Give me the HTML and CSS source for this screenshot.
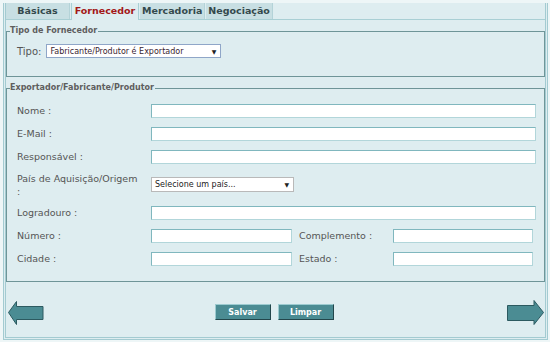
FILE: index.html
```html
<!DOCTYPE html>
<html lang="pt">
<head>
<meta charset="utf-8">
<title>Fornecedor</title>
<link rel="stylesheet" href="styles.css">
</head>
<body>
<div class="panel">
  <div class="tabs">
    <div class="tab">Básicas</div>
    <div class="tab tab-active">Fornecedor</div>
    <div class="tab">Mercadoria</div>
    <div class="tab">Negociação</div>
  </div>

  <fieldset class="group group-tipo">
    <legend>Tipo de Fornecedor</legend>
    <div class="tipo-row">
      <span class="tipo-label">Tipo:</span>
      <div class="select select-tipo"><span>Fabricante/Produtor é Exportador</span><span class="caret">▼</span></div>
    </div>
  </fieldset>

  <fieldset class="group group-exp">
    <legend>Exportador/Fabricante/Produtor</legend>
    <div class="form">
      <label class="lbl">Nome :</label>
      <input class="inp inp-full" type="text">

      <label class="lbl">E-Mail :</label>
      <input class="inp inp-full" type="text">

      <label class="lbl">Responsável :</label>
      <input class="inp inp-full" type="text">

      <label class="lbl">País de Aquisição/Origem<br>:</label>
      <div class="select select-pais"><span>Selecione um país...</span><span class="caret">▼</span></div>

      <label class="lbl">Logradouro :</label>
      <input class="inp inp-full" type="text">

      <label class="lbl">Número :</label>
      <div class="pair">
        <input class="inp inp-half" type="text">
        <label class="lbl lbl-second">Complemento :</label>
        <input class="inp inp-half2" type="text">
      </div>

      <label class="lbl">Cidade :</label>
      <div class="pair">
        <input class="inp inp-half" type="text">
        <label class="lbl lbl-second">Estado :</label>
        <input class="inp inp-half2" type="text">
      </div>
    </div>
  </fieldset>

  <div class="actions">
    <svg class="arrow" width="36" height="26" viewBox="0 0 36 26">
      <path d="M0.5 12.5 L8.5 1.5 L8.5 6.5 L35 6.5 L35 19.5 L8.5 19.5 L8.5 24.5 Z" fill="#4b8c93" stroke="#2c5a60" stroke-width="1"/>
    </svg>
    <div class="buttons">
      <button class="btn" type="button">Salvar</button>
      <button class="btn" type="button">Limpar</button>
    </div>
    <svg class="arrow" width="37" height="26" viewBox="0 0 37 26">
      <path d="M36.5 12.5 L27 0.5 L27 5.5 L0.5 5.5 L0.5 20.5 L27 20.5 L27 24.5 Z" fill="#4b8c93" stroke="#2c5a60" stroke-width="1"/>
    </svg>
  </div>
</div>
</body>
</html>
```

FILE: styles.css
```css
* { box-sizing: border-box; }

html, body {
  margin: 0;
  padding: 0;
  background: #eef6f7;
  font-family: "DejaVu Sans", Verdana, sans-serif;
}

.panel {
  margin: 3px 0 0 3px;
  width: 545px;
  height: 337px;
  background: #deedf0;
  border: 3px double #a3cbd1;
  border-top: none;
  display: flex;
  flex-direction: column;
}

.tabs {
  display: flex;
  height: 17px;
  border-bottom: 1px solid #a9cfd4;
  gap: 1px;
}

.tab {
  min-width: 63px;
  padding: 0 2px;
  height: 16px;
  line-height: 16px;
  text-align: center;
  font-size: 9.5px;
  font-weight: bold;
  color: #34494c;
  background: #c8dfe3;
  border-right: 1px solid #b4d3d8;
}

.tab:first-child { min-width: 64px; }

.tab-active {
  min-width: 68px;
  color: #a31818;
  background: #deedf0;
  border-left: 1px solid #a9cfd4;
  border-right: 1px solid #a9cfd4;
  height: 17px;
}

.group {
  margin: 0;
  padding: 0;
  border: 1px solid #6f9598;
  min-width: 0;
}

.group legend {
  padding: 0 1px 0 0;
  margin-left: -7px;
  font-size: 8px;
  line-height: 10px;
  font-weight: bold;
  color: #5e5e5e;
}

.group-tipo {
  margin-top: 6px;
  padding: 8px 9px 18px 10px;
}

.group-exp {
  margin-top: 6px;
  padding: 6px 9px 11px 10px;
}

.tipo-row {
  display: flex;
  align-items: center;
  gap: 5px;
}

.tipo-label {
  font-size: 10px;
  color: #555;
}

.select {
  display: flex;
  align-items: center;
  justify-content: space-between;
  height: 14px;
  background: #fff;
  padding: 0 4px 0 3px;
  font-size: 8px;
  color: #3a2430;
}

.select .caret {
  font-size: 6px;
  color: #222;
}

.select-tipo {
  width: 175px;
  border: 1px solid #8fa6c8;
}

.select-pais {
  width: 143px;
  height: 15px;
  border: 1px solid #b9b9b9;
  color: #222;
}

.form {
  display: grid;
  grid-template-columns: 134px 1fr;
  grid-template-rows: 23px 23px 23px 33px 23px 23px 23px;
  align-items: center;
}

.lbl {
  font-size: 9.5px;
  line-height: 13px;
  color: #555;
}

.inp {
  height: 14px;
  margin: 0;
  padding: 0;
  background: #fff;
  border: 1px solid;
  border-color: #80b7be #b2d6da #b2d6da #80b7be;
  outline: none;
}

.inp-full { width: 385px; }

.pair {
  display: flex;
  align-items: center;
}

.inp-half { width: 141px; }

.lbl-second {
  margin-left: 7px;
  width: 94px;
}

.inp-half2 { width: 140px; }

.actions {
  flex: 1;
  display: flex;
  align-items: center;
  padding: 6px 1px 0 2px;
}

.arrow { display: block; }

.buttons {
  flex: 1;
  display: flex;
  justify-content: center;
  gap: 7px;
  margin-bottom: 1px;
  padding-right: 3px;
}

.btn {
  width: 56px;
  height: 16px;
  padding: 0;
  margin: 0;
  background: #4b8c93;
  color: #fff;
  font-family: "DejaVu Sans", Verdana, sans-serif;
  font-size: 8px;
  font-weight: bold;
  border: 1px solid;
  border-color: #9ccbd0 #23464b #23464b #9ccbd0;
}
```
